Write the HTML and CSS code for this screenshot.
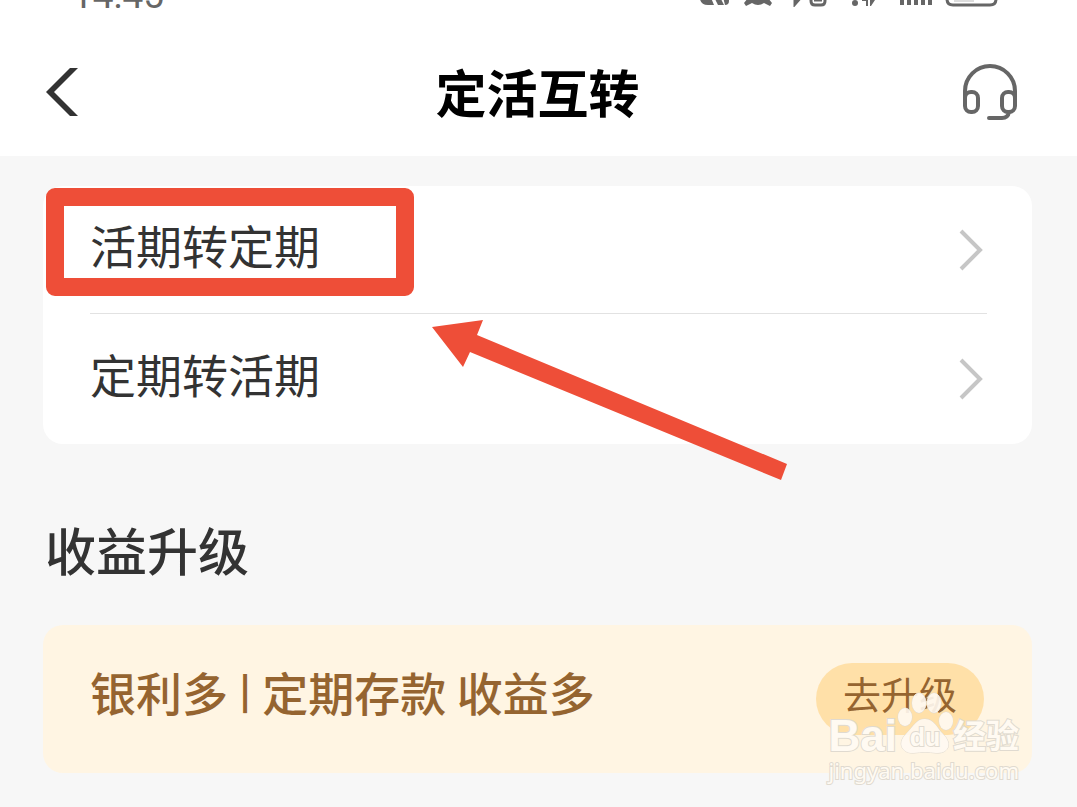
FILE: index.html
```html
<!DOCTYPE html>
<html lang="zh-CN">
<head>
  <meta charset="UTF-8" />
  <meta name="viewport" content="width=device-width, initial-scale=1.0" />
  <title>定活互转</title>
  <link rel="stylesheet" href="styles.css">
</head>
<body>
  <!-- Status bar + navigation -->
  <header class="top">
    <div class="status-bar">
      <span class="time">14:45</span>
      <svg class="status-icons" width="300" height="14" viewBox="0 0 300 14" aria-hidden="true">
        <g fill="#666">
          <path d="M0 0h9l5 12H8Q1 12 0 6zM12 0h6l6 12h-6zM22 0h7v8q0 4-4 4z" />
          <path d="M47 0h21v5l4 5-2 3-6-3q-6 4-12 0l-6 3-2-3 4-5z" />
          <circle cx="155" cy="10" r="3" />
          <path d="M162 7l6-4v10h-2V8h-4zM170 3h3v4l4-3-6 9h-1z" />
          <path d="M200 0h4v12h-4zM207 0h4v12h-4zM214 0h4v12h-4zM221 0h4v12h-4zM228 0h4v12h-4z" />
        </g>
        <g fill="none" stroke="#666" stroke-width="3">
          <path d="M95 0v11l7-8M111 0v8q0 4 4 4h6q4 0 4-4V0M114 7h8" />
          <path d="M247 0v6q0 6 6 6h37q6 0 6-6V0" />
        </g>
        <path d="M254 8h20" stroke="#ddd" stroke-width="2" />
      </svg>
    </div>
    <nav class="nav-bar">
      <button class="icon-button" type="button" aria-label="返回">
        <svg width="34" height="50" viewBox="0 0 34 50">
          <path d="M25 1h8L9 25l24 24h-8L1 25z" fill="#333" />
        </svg>
      </button>
      <h1>定活互转</h1>
      <button class="icon-button" type="button" aria-label="客服">
        <svg width="56" height="58" viewBox="0 0 56 58" fill="none" stroke="#666" stroke-width="4" stroke-linecap="round">
          <path d="M3 40V28a25 25 0 0 1 50 0v12" />
          <rect x="3" y="29" width="13" height="20" rx="6" />
          <rect x="40" y="29" width="13" height="20" rx="6" />
          <path d="M47 49q-1 6-7 6H27" />
        </svg>
      </button>
    </nav>
  </header>

  <main>
    <!-- Transfer list -->
    <section class="card">
      <a class="row" href="#">
        <span>活期转定期</span>
        <svg width="24" height="42" viewBox="0 0 24 42"><path d="M2 2l19 19L2 40" /></svg>
      </a>
      <a class="row" href="#">
        <span>定期转活期</span>
        <svg width="24" height="42" viewBox="0 0 24 42"><path d="M2 2l19 19L2 40" /></svg>
      </a>
      <div class="highlight"></div>
      <svg class="arrow" width="356" height="162" viewBox="0 0 356 162" aria-hidden="true">
        <path d="M0 8L51 1 45 16 355 145 349 161 38 33 31 48z" fill="#ee4e38" />
      </svg>
    </section>

    <!-- Upgrade section -->
    <h2>收益升级</h2>
    <section class="promo">
      <p>银利多 <span class="divider">|</span> 定期存款 收益多</p>
      <button class="upgrade" type="button">去升级</button>

      <div class="watermark">
        <div class="wm-logo">
          <span class="wm-bai">Bai</span>
          <span class="wm-paw">
            <svg width="56" height="62" viewBox="0 0 56 62" aria-hidden="true">
              <ellipse cx="8" cy="25" rx="7" ry="9" />
              <ellipse cx="22" cy="11" rx="7" ry="10" />
              <ellipse cx="37" cy="11" rx="7" ry="10" />
              <ellipse cx="49" cy="29" rx="7" ry="9" />
              <path d="M28 27c9 0 12 9 18 15 11 11 4 20-7 19-8-1-14-1-22 0C6 62-1 52 9 42c7-7 10-15 19-15z" />
            </svg>
            <b>du</b>
          </span>
          <span class="wm-cn">经验</span>
        </div>
        <div class="wm-url">jingyan.baidu.com</div>
      </div>
    </section>
  </main>
</body>
</html>
```
FILE: styles.css
```css
:root {
  --bg: #f7f7f7;
  --text: #333;
  --mark: #ee4e38;
  --gold-bg: #fff5e3;
  --gold-button: #ffe0a8;
  --gold-text: #956430;
}

* {
  margin: 0;
  padding: 0;
  box-sizing: border-box;
}
body {
  font-family: "Noto Sans CJK SC", sans-serif;
  background: var(--bg);
  color: var(--text);
}
svg { display: block; }
button {
  border: none;
  background: none;
  font-family: inherit;
  cursor: pointer;
}

/* Header */
.top { background: #fff; }
.status-bar {
  display: flex;
  justify-content: space-between;
  align-items: flex-end;
  height: 14px;
  padding: 0 77px 0 72px;
  overflow: hidden;
}
.time {
  font-family: Roboto, sans-serif;
  font-size: 37px;
  line-height: 36px;
  color: #666;
}
.status-icons { margin-bottom: 7px; }
.nav-bar {
  display: flex;
  justify-content: space-between;
  align-items: center;
  height: 142px;
  padding: 14px 59px 0 45px;
}
.icon-button {
  display: flex;
  width: 56px;
}
h1 {
  padding: 0 0 2px 12px;
  font-size: 51px;
  font-weight: 700;
  line-height: 72px;
  color: #000;
}

/* Transfer list */
main { padding: 30px 45px 34px 43px; }
.card {
  position: relative;
  padding: 0 45px 0 47px;
  background: #fff;
  border-radius: 20px;
}
.row {
  display: flex;
  justify-content: space-between;
  align-items: center;
  height: 127px;
  padding-right: 4px;
  font-size: 46px;
  color: var(--text);
  text-decoration: none;
}
.row + .row {
  height: 131px;
  border-top: 1px solid #e2e2e2;
}
.row span { padding-bottom: 12px; }
.row path {
  fill: none;
  stroke: #c6c6c6;
  stroke-width: 4;
}

/* Marks drawn over the list */
.highlight {
  position: absolute;
  top: 2px;
  left: 3px;
  width: 368px;
  height: 108px;
  border: 18px solid var(--mark);
  border-radius: 9px;
}
.arrow {
  position: absolute;
  top: 133px;
  left: 389px;
}

/* Upgrade section */
h2 {
  margin: 69px 0 40px 2px;
  font-size: 51px;
  font-weight: 500;
  line-height: 72px;
}
.promo {
  position: relative;
  display: flex;
  justify-content: space-between;
  align-items: center;
  height: 148px;
  padding: 0 48px 0 47px;
  background: var(--gold-bg);
  border-radius: 20px;
  color: var(--gold-text);
}
.promo p {
  padding-bottom: 16px;
  font-size: 46px;
  font-weight: 500;
  line-height: 68px;
}
.divider {
  padding: 0 1px;
  font-family: Roboto, sans-serif;
  font-weight: 700;
  line-height: 40px;
  vertical-align: 4px;
}
.upgrade {
  width: 168px;
  height: 72px;
  padding-bottom: 12px;
  border-radius: 36px;
  background: var(--gold-button);
  color: var(--gold-text);
  font-size: 38px;
  line-height: 60px;
}

/* Watermark */
.watermark {
  position: absolute;
  top: 65px;
  right: 13px;
  color: #fffaf2;
  -webkit-text-stroke: 2px #e0dad0;
  paint-order: stroke;
}
.wm-logo {
  display: flex;
  align-items: flex-end;
  height: 64px;
}
.wm-bai {
  font-family: "Liberation Sans", sans-serif;
  font-size: 44px;
  font-weight: 700;
  line-height: 36px;
}
.wm-paw { position: relative; }
.wm-paw svg {
  fill: rgba(255, 250, 242, 0.9);
  stroke: #e0dad0;
}
.wm-paw b {
  position: absolute;
  right: 0;
  bottom: 2px;
  left: 0;
  font-family: "Liberation Sans", sans-serif;
  font-size: 25px;
  line-height: 30px;
  text-align: center;
}
.wm-cn {
  font-size: 33px;
  font-weight: 700;
  line-height: 40px;
}
.wm-url {
  font-family: "Noto Sans", sans-serif;
  font-size: 22px;
  line-height: 32px;
}
```
